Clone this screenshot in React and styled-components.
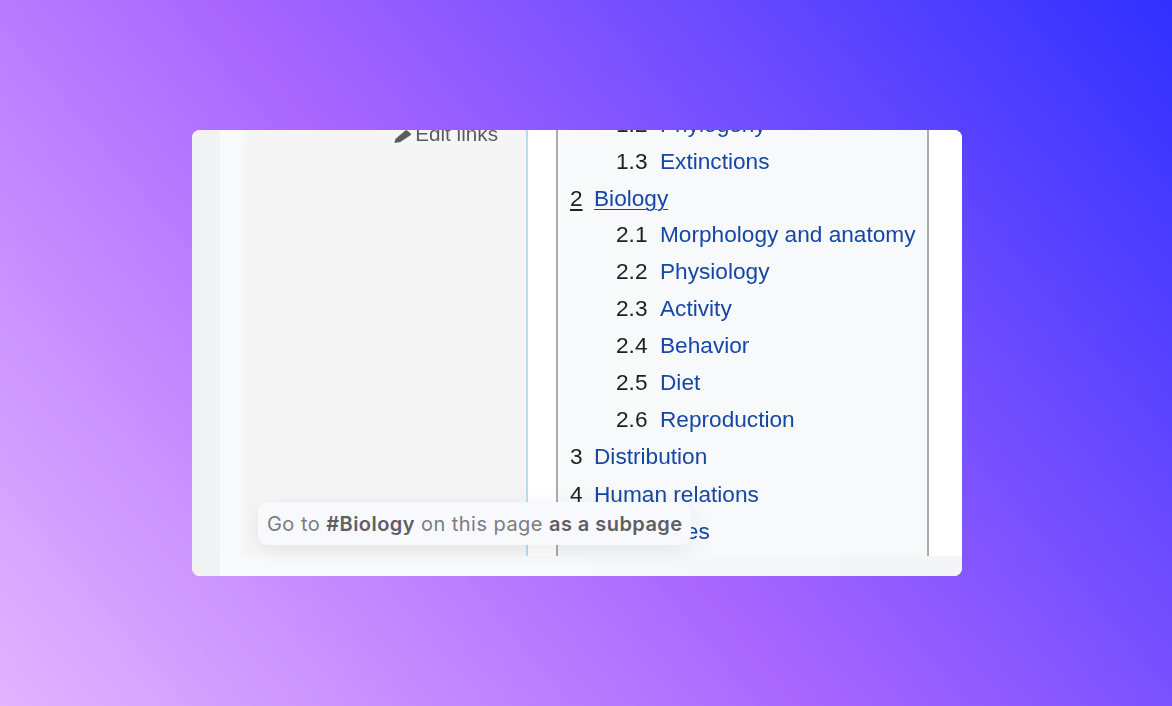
import styled, { createGlobalStyle } from 'styled-components';

const GlobalStyle = createGlobalStyle`
  html, body {
    margin: 0;
    padding: 0;
  }
`;

const Page = styled.div`
  width: 100%;
  height: 100vh;
  box-sizing: border-box;
  padding-right: 18px;
  display: flex;
  align-items: center;
  justify-content: center;
  overflow: hidden;
  background: linear-gradient(50deg, #e3b4ff 0%, #a866ff 46%, #3030ff 100%);
`;

const Card = styled.div`
  position: relative;
  width: 770px;
  height: 446px;
  display: flex;
  overflow: hidden;
  border-radius: 8px;
  background: #f7f8fa;
`;

const Rail = styled.div`
  width: 28px;
  flex-shrink: 0;
  background: #f1f2f3;
`;

const Main = styled.div`
  flex: 1;
  display: flex;
  flex-direction: column;
  min-width: 0;
`;

const Columns = styled.div`
  height: 426px;
  display: flex;
  overflow: hidden;
  padding-left: 27px;
  font-family: "Liberation Sans", Arial, sans-serif;
  background: #f8f9fb;
  filter: blur(0.3px);
`;

const Sidebar = styled.aside`
  width: 251px;
  flex-shrink: 0;
  display: flex;
  justify-content: flex-end;
  align-items: flex-start;
  padding-right: 28px;
  background: linear-gradient(180deg, #f5f5f5 84%, #f7f7f8 100%);
  border-right: 2px solid #b7dcf8;
  box-shadow: 0 0 10px rgba(0, 0, 0, 0.03);
`;

const EditLink = styled.span`
  display: flex;
  align-items: center;
  gap: 4px;
  margin-top: -8px;
  font-size: 20.7px;
  line-height: 24px;
  color: #5c5c5c;

  svg {
    width: 17px;
    height: 17px;
    fill: #5c5c5c;
    margin-top: 2px;
  }
`;

const Content = styled.div`
  flex: 1;
  display: flex;
  padding-left: 28px;
  background: #fff;
`;

const Toc = styled.nav`
  width: 373px;
  flex-shrink: 0;
  padding-left: 12px;
  box-sizing: border-box;
  border-left: 2px solid #a9adb1;
  border-right: 2px solid #a9adb1;
  background: #f8f9fb;
`;

const TocList = styled.ol`
  list-style: none;
  margin: -24px 0 0;
  padding: 0;
`;

const TocItem = styled.li`
  display: flex;
  align-items: center;
  height: 37px;
  margin-bottom: ${(p) => p.$after || 0}px;
  font-size: 22.65px;
  padding-left: ${(p) => (p.$sub ? '46px' : '0')};
`;

const Num = styled.span`
  width: ${(p) => (p.$sub ? '44px' : '24px')};
  color: #202122;
  flex-shrink: 0;
  text-decoration: ${(p) => (p.$active ? 'underline' : 'none')};
  text-underline-offset: 3px;
`;

const TocLink = styled.a`
  color: #1447a6;
  text-decoration: ${(p) => (p.$active ? 'underline' : 'none')};
  text-underline-offset: 3px;
  text-decoration-thickness: 1px;
  white-space: nowrap;
`;

const Footer = styled.div`
  height: 20px;
  background: linear-gradient(90deg, #f9fafc 0%, #f9fafc 45%, #f4f5f7 85%);
`;

const Tooltip = styled.div`
  position: absolute;
  left: 66px;
  top: 372px;
  width: 433px;
  height: 43px;
  box-sizing: border-box;
  display: flex;
  align-items: center;
  padding-left: 9px;
  border-radius: 10px;
  background: #f8f9fc;
  box-shadow: 0 6px 24px rgba(0, 0, 0, 0.08);
  font-family: Inter, "Noto Sans", sans-serif;
  font-size: 20px;
  letter-spacing: 0.45px;
  color: #7c7c80;
  white-space: pre;

  b {
    font-weight: 600;
    color: #5f5f63;
  }
`;

const entries = [
  { num: '1.2', label: 'Phylogeny', sub: true },
  { num: '1.3', label: 'Extinctions', sub: true },
  { num: '2', label: 'Biology', active: true, after: -1 },
  { num: '2.1', label: 'Morphology and anatomy', sub: true },
  { num: '2.2', label: 'Physiology', sub: true },
  { num: '2.3', label: 'Activity', sub: true },
  { num: '2.4', label: 'Behavior', sub: true },
  { num: '2.5', label: 'Diet', sub: true },
  { num: '2.6', label: 'Reproduction', sub: true },
  { num: '3', label: 'Distribution', after: 1 },
  { num: '4', label: 'Human relations' },
  { num: '5', label: 'References' },
];

export default function App() {
  return (
    <>
      <GlobalStyle />
      <Page>
        <Card>
          <Rail />
          <Main>
            <Columns>
              <Sidebar>
                <EditLink>
                  <svg viewBox="0 0 16 16">
                    <path d="M0.5 15l.8-3.8L10.6 3.4a1.4 1.4 0 0 1 1.9 0l3 2.4a1.4 1.4 0 0 1 0 2L6 14.2z" />
                  </svg>
                  Edit links
                </EditLink>
              </Sidebar>
              <Content>
                <Toc>
                  <TocList>
                    {entries.map((e) => (
                      <TocItem key={e.num} $sub={e.sub} $after={e.after}>
                        <Num $sub={e.sub} $active={e.active}>{e.num}</Num>
                        <TocLink href="#" $active={e.active}>{e.label}</TocLink>
                      </TocItem>
                    ))}
                  </TocList>
                </Toc>
              </Content>
            </Columns>
            <Footer />
          </Main>
          <Tooltip>
            Go to <b>#Biology</b> on this page <b>as a subpage</b>
          </Tooltip>
        </Card>
      </Page>
    </>
  );
}
